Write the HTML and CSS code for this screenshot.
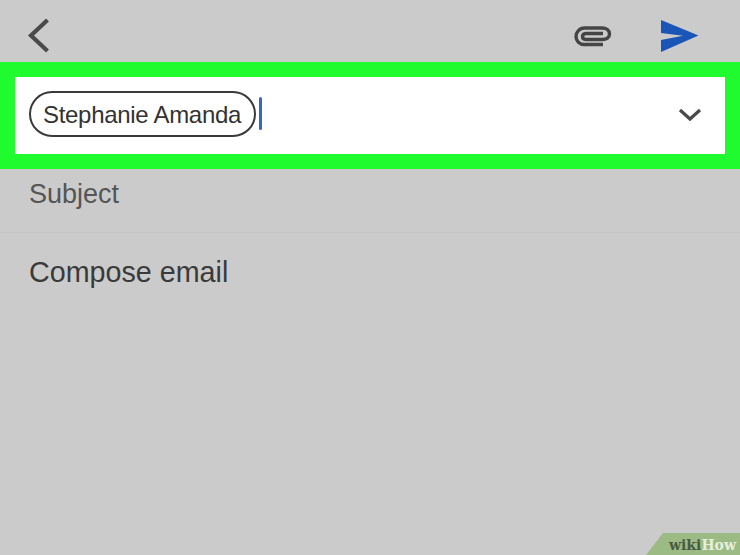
FILE: index.html
```html
<!DOCTYPE html>
<html lang="en">
<head>
  <meta charset="UTF-8" />
  <title>Compose email</title>
  <link rel="stylesheet" href="styles.css">
</head>
<body>
  <div class="screen">
    <div class="toolbar">
      <svg class="back" width="30" height="38" viewBox="0 0 30 38">
        <path d="M23.500 3 L7 18.500 L23.500 34" fill="none" stroke="#4a4a4a" stroke-width="4.200"/>
      </svg>
      <div class="actions">
        <svg class="clip" width="38" height="22" viewBox="0 0 38 22">
          <path d="M29 19.500 H10.500 C5.500 19.500 2 16 2 11.500 C2 7 5.500 3 10.500 3 H28 C32.500 3 35.500 5.500 35.500 9 C35.500 12.500 32.500 14.500 28.500 14.500 H12.500 C10 14.500 8.500 13.300 8.500 11.500 C8.500 9.700 10 8.500 12.500 8.500 H29" fill="none" stroke="#454545" stroke-width="3.400"/>
        </svg>
        <svg class="send" width="40" height="34" viewBox="0 0 40 34">
          <path d="M1 1 L38.500 16.500 L1 33 L1 21 L23 16.800 L1 14 Z" fill="#1a56b8"/>
        </svg>
      </div>
    </div>
    <div class="to-box">
      <div class="to-field">
        <span class="chip">Stephanie Amanda</span>
        <span class="cursor"></span>
        <svg class="chevron" width="24" height="14" viewBox="0 0 24 14">
          <path d="M2 2 L12 11 L22 2" fill="none" stroke="#4a4a4a" stroke-width="3.200"/>
        </svg>
      </div>
    </div>
    <div class="subject">Subject</div>
    <div class="body-text">Compose email</div>
  </div>
  <div class="badge"><span class="wiki">wiki</span><span class="how">How</span></div>
</body>
</html>
```

FILE: styles.css
```css
body {
  margin: 0;
  font-family: "Liberation Sans", Arial, sans-serif;
}

.screen {
  width: 740px;
  height: 555px;
  background: #cbcbcb;
  overflow: hidden;
}

.toolbar {
  height: 62px;
  box-sizing: border-box;
  padding: 0 40px 0 24px;
  display: flex;
  align-items: center;
  justify-content: space-between;
}

.back {
  margin-top: 9px;
}

.actions {
  display: flex;
  align-items: center;
  gap: 48px;
  margin-top: 9px;
}

.to-box {
  height: 107px;
  box-sizing: border-box;
  padding: 15px;
  background: #1ffb2e;
}

.to-field {
  height: 77px;
  box-sizing: border-box;
  background: #fff;
  display: flex;
  align-items: center;
  padding: 0 23px 4px 14px;
}

.chip {
  height: 46px;
  box-sizing: border-box;
  border: 2px solid #3a3a3a;
  border-radius: 23px;
  padding: 2px 13px 0 12px;
  display: flex;
  align-items: center;
  font-size: 24px;
  letter-spacing: -0.3px;
  color: #333;
}

.cursor {
  width: 3px;
  height: 33px;
  margin-left: 3px;
  background: #3b62d0;
  border-radius: 2px;
}

.chevron {
  margin-left: auto;
  margin-top: 2px;
}

.subject {
  height: 64px;
  box-sizing: border-box;
  padding: 10px 0 0 29px;
  border-bottom: 1px solid #c6c6c6;
  font-size: 27px;
  line-height: 30px;
  color: #555;
}

.body-text {
  padding: 23px 0 0 29px;
  font-size: 28.700px;
  line-height: 32px;
  color: #3a3a3a;
}

.badge {
  position: absolute;
  right: 0;
  bottom: 0;
  width: 94px;
  height: 22px;
  box-sizing: border-box;
  padding: 3px 4px 0 0;
  background: #9cba84;
  clip-path: polygon(17px 0, 100% 0, 100% 100%, 0 100%);
  text-align: right;
  font-family: "DejaVu Serif", serif;
  font-size: 14px;
  line-height: 18px;
  font-weight: bold;
}

.wiki {
  color: #4a5a42;
}

.how {
  color: #e6efdc;
}
```
